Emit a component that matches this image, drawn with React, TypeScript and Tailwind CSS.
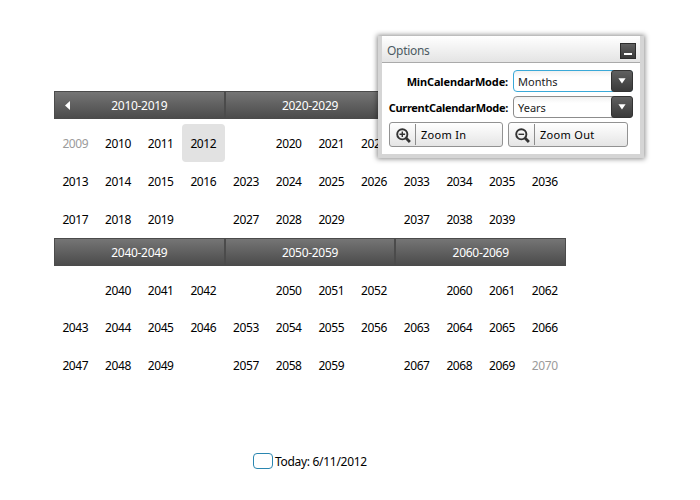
import React from "react";

const text = "font-['Noto_Sans','Open_Sans',sans-serif]";

type Decade = { start: number; before?: boolean; after?: boolean };

const rows: Decade[][] = [
  [{ start: 2010, before: true }, { start: 2020 }, { start: 2030 }],
  [{ start: 2040 }, { start: 2050 }, { start: 2060, after: true }],
];

function DecadeView({ decade, first, back }: { decade: Decade; first: boolean; back: boolean }) {
  const { start } = decade;
  return (
    <section>
      <header className="relative flex h-7 items-center justify-center border-x border-t border-[#4b4b4b] bg-linear-to-b from-[#757575] to-[#4a4a4a] pt-px tracking-[-0.3px] text-white">
        {back && (
          <svg className="absolute left-[10px] top-[9px]" width="6" height="9" viewBox="0 0 6 9">
            <path d="M5 0v9L0 4.5z" fill="#fff" />
          </svg>
        )}
        {start}-{start + 9}
      </header>
      <div
        className={`grid grid-cols-4 ${
          first ? "grid-rows-[38px_38px_38px] pt-[5px]" : "grid-rows-[38px_36px_39px] pt-[6px]"
        }`}
      >
        {Array.from({ length: 12 }, (_, i) => {
          const year = start - 1 + i;
          const outside = i === 0 || i === 11;
          const shown = !outside || (i === 0 ? decade.before : decade.after);
          return (
            <div
              key={year}
              className={`flex items-center justify-center rounded-[4px] ${first ? "pt-[2px]" : ""} ${
                year === 2012 ? "bg-[#e2e2e2]" : ""
              } ${outside ? "text-[#9b9b9b]" : "text-black"}`}
            >
              {shown ? year : ""}
            </div>
          );
        })}
      </div>
    </section>
  );
}

function Select({ value, active }: { value: string; active?: boolean }) {
  return (
    <div
      className={`flex h-[22px] w-[120px] items-center rounded-[4px] border bg-linear-to-b from-[#f1f1f1] to-white to-30% ${
        active ? "border-[#3aa9d8]" : "border-[#8c8c8c]"
      }`}
    >
      <span className="flex-1 pl-1 pt-px text-[11px] leading-none tracking-normal text-[#222]">{value}</span>
      <span className="-mr-px flex h-[22px] w-[22px] items-center justify-center rounded-[3px] border border-[#333] bg-linear-to-b from-[#606060] to-[#3a3a3a]">
        <svg width="8" height="6" viewBox="0 0 8 6">
          <path d="M0.4 0.3h7.2L4 5.6z" fill="#fff" />
        </svg>
      </span>
    </div>
  );
}

function ZoomButton({ label, plus, width }: { label: string; plus?: boolean; width: string }) {
  return (
    <button
      className={`flex h-[25px] ${width} items-center rounded-[3px] border border-[#929292] bg-linear-to-b from-white to-[#e5e5e5] text-[11px] leading-none text-black`}
    >
      <span className="flex h-[21px] w-[26px] items-center justify-center border-r border-[#8c8c8c] pl-px pt-px">
        <svg width="15" height="15" viewBox="0 0 15 15" fill="none" stroke="#333">
          <circle cx="6.3" cy="6.3" r="5.1" strokeWidth="1.9" />
          <path d="M10 10l3.9 3.9" strokeWidth="2.8" />
          <path d={plus ? "M3.5 6.3h5.6M6.3 3.5v5.6" : "M3.5 6.3h5.6"} strokeWidth="1.4" />
        </svg>
      </span>
      <span className="pl-[5px] tracking-[0.3px]">{label}</span>
    </button>
  );
}

function Options() {
  return (
    <aside className="absolute left-[378px] top-9 h-[122px] w-[266px] border-x-4 border-b-4 border-[#d5d5d5] bg-white shadow-[0_0_5px_1px_rgba(0,0,0,0.45)]">
      <div className="flex h-[27px] items-center justify-between border-b border-[#aaa] bg-linear-to-b from-white to-[#e4e4e4] pl-[5px] pr-1">
        <span className="pt-[4px] text-[12px] tracking-[-0.3px] text-[#4c5a62]">Options</span>
        <span className="mt-[3px] flex h-4 w-4 items-end justify-center border border-[#2c2c2c] bg-linear-to-b from-[#606060] to-[#3a3a3a] pb-[3px]">
          <span className="h-[2px] w-2 bg-white" />
        </span>
      </div>
      <div className="grid grid-cols-[126px_120px] items-center gap-x-[5px] gap-y-1 pt-[7px]">
        <span className="pt-[2px] text-right text-[11px] font-bold tracking-[-0.15px]">MinCalendarMode:</span>
        <Select value="Months" active />
        <span className="pt-[2px] text-right text-[11px] font-bold tracking-[-0.3px]">CurrentCalendarMode:</span>
        <Select value="Years" />
      </div>
      <div className="flex gap-[5px] pl-[7px] pt-1">
        <ZoomButton label="Zoom In" plus width="w-[114px]" />
        <ZoomButton label="Zoom Out" width="w-[120px]" />
      </div>
    </aside>
  );
}

export default function App() {
  return (
    <main className={`relative h-[500px] w-[700px] overflow-hidden bg-white pl-[54px] pt-[91px] text-[12px] leading-4 tracking-[-0.4px] ${text}`}>
      {rows.map((row, r) => (
        <div key={r} className="grid w-[512px] grid-cols-3">
          {row.map((decade, i) => (
            <DecadeView key={decade.start} decade={decade} first={r === 0} back={r === 0 && i === 0} />
          ))}
        </div>
      ))}
      <footer className="flex items-start pl-[199px] pt-[68px]">
        <span className="mr-[2px] h-4 w-5 rounded-[4px] border border-[#2a86b0]" />
        <span className="pt-px tracking-[-0.3px]">Today: 6/11/2012</span>
      </footer>
      <Options />
    </main>
  );
}
